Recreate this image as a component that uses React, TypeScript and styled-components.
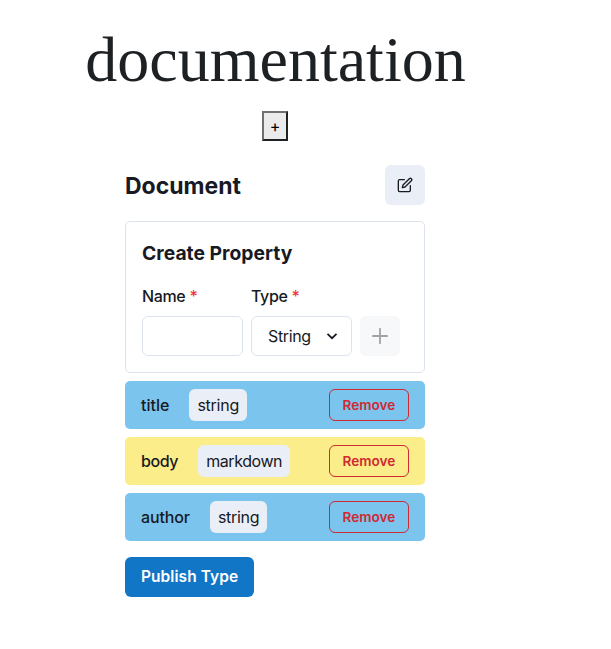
import React from "react";
import styled, { createGlobalStyle } from "styled-components";

const GlobalStyle = createGlobalStyle`
  *, *::before, *::after { box-sizing: border-box; }
  body {
    margin: 0;
    background: #fff;
    color: #171923;
    font-family: Inter, "Liberation Sans", sans-serif;
    font-size: 16px;
    line-height: 24px;
  }
  button, input { font-family: inherit; margin: 0; }
`;

const Page = styled.main`
  width: 550px;
  padding-top: 12px;
  display: flex;
  flex-direction: column;
  align-items: center;
`;

const Title = styled.h1`
  margin: 0;
  padding-left: 1px;
  height: 99px;
  line-height: 96px;
  font-family: "Liberation Serif", "Times New Roman", serif;
  font-size: 64px;
  font-weight: 400;
  color: #1d2124;
`;

const AddDocument = styled.button`
  width: 26px;
  height: 30px;
  padding: 0 0 1px;
  border: 2px solid;
  border-color: #6e7072 #1d2124 #1d2124 #6e7072;
  background: #ebebeb;
  color: #000;
  font-size: 16px;
  line-height: 24px;
`;

const Panel = styled.section`
  width: 300px;
  margin-top: 24px;
`;

const Header = styled.header`
  display: flex;
  align-items: center;
  justify-content: space-between;
  margin-bottom: 16px;
`;

const Heading = styled.h2`
  margin: 2px 0 0;
  font-size: 23px;
  line-height: 32px;
  font-weight: 700;
  letter-spacing: 0;
`;

const IconButton = styled.button<{ $muted?: boolean }>`
  display: flex;
  align-items: center;
  justify-content: center;
  width: 40px;
  height: 40px;
  padding: 0;
  border: 0;
  border-radius: 6px;
  color: ${(p) => (p.$muted ? "#a3a3a5" : "#171923")};
  background: ${(p) => (p.$muted ? "#f7f8fa" : "#eaeef6")};
`;

const Card = styled.form`
  height: 152px;
  padding: 15px;
  padding-left: 16px;
  border: 1px solid #dce3ef;
  border-radius: 5px;
  margin-bottom: 8px;
`;

const CardTitle = styled.h3`
  margin: 2px 0 17px;
  font-size: 19.3px;
  line-height: 28px;
  font-weight: 700;
  letter-spacing: 0.02px;
`;

const Fields = styled.div`
  display: flex;
  align-items: flex-end;
  gap: 8px;
`;

const Field = styled.label`
  width: 101px;
  font-weight: 500;
  letter-spacing: -0.35px;
`;

const Required = styled.span`
  margin-left: 4px;
  color: #f0333b;
`;

const TextInput = styled.input`
  display: block;
  width: 100%;
  height: 40px;
  margin-top: 8px;
  padding: 0 16px;
  border: 1px solid #dce3ef;
  border-radius: 6px;
  background: #fff;
  font-size: 16px;
  outline: none;
`;

const Select = styled.div`
  display: flex;
  align-items: center;
  justify-content: space-between;
  height: 40px;
  margin-top: 8px;
  padding: 0 12px 0 16px;
  border: 1px solid #dce3ef;
  border-radius: 6px;
  font-weight: 400;
`;

const PropertyRow = styled.div<{ $color: string }>`
  display: flex;
  align-items: center;
  height: 48px;
  padding: 0 16px;
  margin-bottom: 8px;
  border-radius: 5px;
  background: ${(p) => p.$color};
`;

const PropertyName = styled.span<{ $tracking: number }>`
  font-weight: 500;
  letter-spacing: ${(p) => p.$tracking}px;
  margin-right: 20px;
`;

const TypeTag = styled.span<{ $tracking: number }>`
  height: 32px;
  padding: 0 8px;
  line-height: 32px;
  border-radius: 6px;
  background: #eaeef6;
  letter-spacing: ${(p) => p.$tracking}px;
`;

const RemoveButton = styled.button`
  width: 80px;
  height: 32px;
  margin-left: auto;
  padding: 0 0 1px;
  border: 1px solid #cf2932;
  border-radius: 6px;
  background: transparent;
  color: #cf2932;
  font-size: 13.6px;
  font-weight: 600;
`;

const PublishButton = styled.button`
  height: 40px;
  margin-top: 8px;
  padding: 0 16px 2px;
  border: 0;
  border-radius: 6px;
  background: #1076c5;
  color: #fff;
  font-size: 15.5px;
  font-weight: 600;
  letter-spacing: 0.06px;
`;

const properties = [
  { name: "title", nameTracking: 0, type: "string", typeTracking: -0.24, color: "#7bc4ee" },
  { name: "body", nameTracking: -0.4, type: "markdown", typeTracking: -0.43, color: "#fbed89" },
  { name: "author", nameTracking: -0.12, type: "string", typeTracking: -0.3, color: "#7bc4ee" },
];

const EditIcon = () => (
  <svg width="16" height="16" viewBox="0 0 24 24" fill="none" stroke="currentColor" strokeWidth="2" strokeLinecap="round" strokeLinejoin="round">
    <path d="M11 4H4a2 2 0 0 0-2 2v14a2 2 0 0 0 2 2h14a2 2 0 0 0 2-2v-7" />
    <path d="M18.5 2.5a2.121 2.121 0 0 1 3 3L12 15l-4 1 1-4 9.500-9.500z" />
  </svg>
);

const ChevronIcon = () => (
  <svg width="14" height="14" viewBox="0 0 14 14" fill="none" stroke="currentColor" strokeWidth="1.700">
    <path d="M2.500 4.800 7 9.200l4.500-4.400" />
  </svg>
);

const PlusIcon = () => (
  <svg width="16" height="16" viewBox="0 0 16 16" fill="none" stroke="currentColor" strokeWidth="1.800" strokeLinecap="round">
    <path d="M8 .8v14.400M.8 8h14.400" />
  </svg>
);

export default function App() {
  return (
    <Page>
      <GlobalStyle />
      <Title>documentation</Title>
      <AddDocument type="button">+</AddDocument>
      <Panel>
        <Header>
          <Heading>Document</Heading>
          <IconButton type="button" aria-label="Edit document">
            <EditIcon />
          </IconButton>
        </Header>
        <Card>
          <CardTitle>Create Property</CardTitle>
          <Fields>
            <Field>
              Name<Required>*</Required>
              <TextInput />
            </Field>
            <Field as="div">
              Type<Required>*</Required>
              <Select>
                String
                <ChevronIcon />
              </Select>
            </Field>
            <IconButton type="button" aria-label="Add property" $muted disabled>
              <PlusIcon />
            </IconButton>
          </Fields>
        </Card>
        {properties.map((property) => (
          <PropertyRow key={property.name} $color={property.color}>
            <PropertyName $tracking={property.nameTracking}>{property.name}</PropertyName>
            <TypeTag $tracking={property.typeTracking}>{property.type}</TypeTag>
            <RemoveButton type="button">Remove</RemoveButton>
          </PropertyRow>
        ))}
        <PublishButton type="button">Publish Type</PublishButton>
      </Panel>
    </Page>
  );
}
